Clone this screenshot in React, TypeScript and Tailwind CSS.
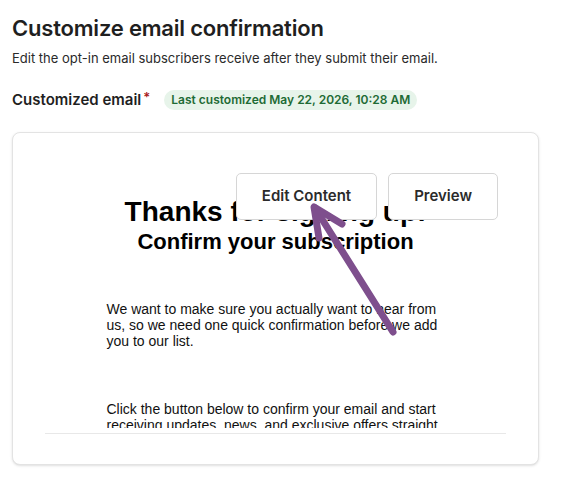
import React from "react";

const ui = { fontFamily: "Inter, 'Noto Sans', sans-serif" };
const mail = { fontFamily: "'Liberation Sans', Arial, sans-serif" };

const EmailPreview = () => {
  return (
    <div className="pb-[5px] border-b border-[#e8e8e8]">
      <div className="h-[263px] overflow-hidden text-black" style={mail}>
        <div className="pt-[31px] text-center">
          <h1 className="text-[28px] font-bold leading-[1.15]">
            Thanks for signing up!
          </h1>
          <h2 className="text-[22px] font-bold leading-[1.15] mt-[1px]">
            Confirm your subscription
          </h2>
        </div>
        <div className="w-[338px] mx-auto mt-[47px] text-[14px] leading-[16px] text-[#111]">
          <p>
            We want to make sure you actually want to hear from us, so we need
            one quick confirmation before we add you to our list.
          </p>
          <p className="mt-[52px]">
            Click the button below to confirm your email and start receiving
            updates, news, and exclusive offers straight to your inbox.
          </p>
        </div>
      </div>
    </div>
  );
};

const Arrow = () => (
  <svg
    className="absolute inset-0 pointer-events-none"
    width="584"
    height="491"
    viewBox="0 0 584 491"
  >
    <g
      stroke="#7e4f8d"
      strokeWidth="7"
      strokeLinecap="round"
      strokeLinejoin="round"
      fill="none"
    >
      <path d="M393 332 L315 208" />
      <path d="M342 224 L314 207 L319 238" />
    </g>
  </svg>
);

export default function App() {
  return (
    <div className="relative w-[584px] h-[491px] bg-white overflow-hidden" style={ui}>
      <div className="pl-3 pt-[14px]">
        <h1 className="text-[22px] leading-[28px] font-semibold text-[#1f1f1f] tracking-[-0.2px]">
          Customize email confirmation
        </h1>
        <p className="mt-[7px] text-[13px] leading-[18px] text-[#2a2a2a]">
          Edit the opt-in email subscribers receive after they submit their email.
        </p>
        <div className="mt-[23px] flex items-center h-[20px]">
          <span className="text-[15px] leading-[20px] font-semibold text-[#1f1f1f]">
            Customized email
          </span>
          <span className="text-[#a8201a] text-[13px] font-semibold ml-[2px] -mt-[4px]">*</span>
          <span className="ml-[14px] h-[20px] px-[7px] rounded-full bg-[#e7f4ea] text-[#1e6b35] text-[12px] font-semibold leading-[20px]">
            Last customized May 22, 2026, 10:28 AM
          </span>
        </div>
        <div className="relative mt-[22px] w-[527px] rounded-lg border border-[#e3e3e3] shadow-sm px-8 pt-8 pb-[30px] bg-white">
          <EmailPreview />
          <div className="absolute top-[40px] right-[40px] flex gap-[11px]">
            <button className="h-[47px] px-[25px] rounded-[5px] border border-[#d6d6d6] bg-white text-[15px] font-semibold text-[#2b2b2b]">
              Edit Content
            </button>
            <button className="h-[47px] px-[25px] rounded-[5px] border border-[#d6d6d6] bg-white text-[15px] font-semibold text-[#2b2b2b]">
              Preview
            </button>
          </div>
        </div>
      </div>
      <Arrow />
    </div>
  );
}
